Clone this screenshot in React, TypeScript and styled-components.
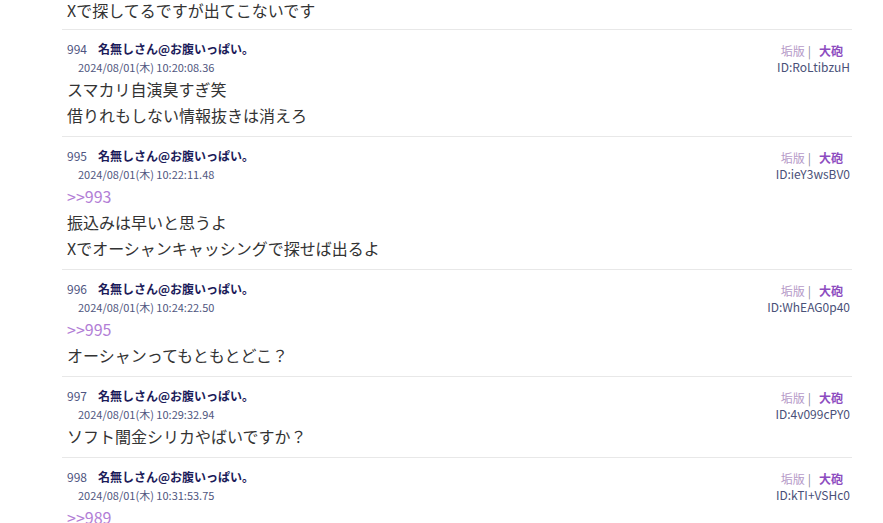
import React from 'react';
import styled, { createGlobalStyle } from 'styled-components';

interface Post {
  no: number;
  name: string;
  date: string;
  id: string;
  anchor?: string;
  lines: string[];
}

const GlobalStyle = createGlobalStyle`
  html, body {
    margin: 0;
    padding: 0;
    background: #ffffff;
    overflow: hidden;
  }
  body {
    font-family: 'Noto Sans CJK JP', 'Noto Sans', sans-serif;
  }
`;

const Thread = styled.div`
  width: 790px;
  margin-left: 62px;
`;

const PostBox = styled.div`
  border-bottom: 1px solid #e8e8e8;
  padding: 8px 2px 8px 5px;
`;

const Tail = styled.div`
  border-bottom: 1px solid #e8e8e8;
  padding: 0 2px 9px 5px;
`;

const Head = styled.div`
  display: flex;
  justify-content: space-between;
  align-items: flex-start;
`;

const NameLine = styled.div`
  display: flex;
  align-items: center;
  height: 20px;
  font-size: 12px;
`;

const Number = styled.span`
  color: #4e5480;
  width: 31px;
`;

const Name = styled.span`
  color: #1c1c5a;
  font-weight: bold;
`;

const DateLine = styled.div`
  font-size: 11px;
  line-height: 18px;
  color: #50567e;
  padding-left: 11px;
`;

const Meta = styled.div`
  padding-top: 5px;
  text-align: right;
  font-size: 12px;
`;

const Tools = styled.div`
  line-height: 16px;
  margin-right: 7px;
`;

const Report = styled.span`
  color: #b69ac8;
`;

const Bar = styled.span`
  color: #8a8a9a;
  margin: 0 8px 0 3px;
`;

const Cannon = styled.span`
  color: #8d4cc0;
  font-weight: bold;
`;

const IdLine = styled.div`
  line-height: 15px;
  color: #4a5078;
`;

const Body = styled.div<{ $tight?: boolean }>`
  font-size: 16px;
  line-height: ${(p) => (p.$tight ? '20px' : '26px')};
  color: #333333;
`;

const Anchor = styled.div`
  font-size: 16px;
  line-height: 26px;
  color: #b27ed6;
`;

const posts: Post[] = [
  {
    no: 994,
    name: '名無しさん@お腹いっぱい。',
    date: '2024/08/01(木) 10:20:08.36',
    id: 'ID:RoLtibzuH',
    lines: ['スマカリ自演臭すぎ笑', '借りれもしない情報抜きは消えろ'],
  },
  {
    no: 995,
    name: '名無しさん@お腹いっぱい。',
    date: '2024/08/01(木) 10:22:11.48',
    id: 'ID:ieY3wsBV0',
    anchor: '>>993',
    lines: ['振込みは早いと思うよ', 'Xでオーシャンキャッシングで探せば出るよ'],
  },
  {
    no: 996,
    name: '名無しさん@お腹いっぱい。',
    date: '2024/08/01(木) 10:24:22.50',
    id: 'ID:WhEAG0p40',
    anchor: '>>995',
    lines: ['オーシャンってもともとどこ？'],
  },
  {
    no: 997,
    name: '名無しさん@お腹いっぱい。',
    date: '2024/08/01(木) 10:29:32.94',
    id: 'ID:4v099cPY0',
    lines: ['ソフト闇金シリカやばいですか？'],
  },
  {
    no: 998,
    name: '名無しさん@お腹いっぱい。',
    date: '2024/08/01(木) 10:31:53.75',
    id: 'ID:kTI+VSHc0',
    anchor: '>>989',
    lines: [],
  },
];

const App: React.FC = () => {
  return (
    <>
      <GlobalStyle />
      <Thread>
        <Tail>
          <Body $tight>Xで探してるですが出てこないです</Body>
        </Tail>
        {posts.map((post) => (
          <PostBox key={post.no}>
            <Head>
              <div>
                <NameLine>
                  <Number>{post.no}</Number>
                  <Name>{post.name}</Name>
                </NameLine>
                <DateLine>{post.date}</DateLine>
              </div>
              <Meta>
                <Tools>
                  <Report>垢版</Report>
                  <Bar>|</Bar>
                  <Cannon>大砲</Cannon>
                </Tools>
                <IdLine>{post.id}</IdLine>
              </Meta>
            </Head>
            {post.anchor && <Anchor>{post.anchor}</Anchor>}
            {post.lines.map((line, i) => (
              <Body key={i}>{line}</Body>
            ))}
          </PostBox>
        ))}
      </Thread>
    </>
  );
};

export default App;
